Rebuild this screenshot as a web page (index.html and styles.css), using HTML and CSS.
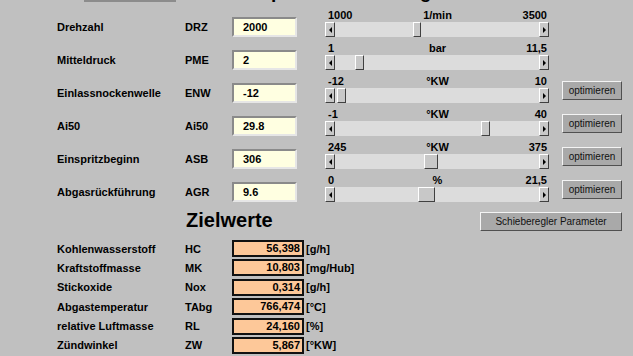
FILE: index.html
```html
<!DOCTYPE html>
<html>
<head>
  <title>Betriebspunkt-Einstellung</title>
  <link rel="stylesheet" href="styles.css">
</head>
<body>
  <div class="top">
    <div class="tab"></div>
    <div class="title">Betriebspunkt-Einstellung</div>
  </div>

  <div class="params">
    <div class="row">
      <div class="name">Drehzahl</div>
      <div class="abbr">DRZ</div>
      <div class="input">2000</div>
      <div class="slider">
        <div class="scale"><span>1000</span><span>1/min</span><span class="max">3500</span></div>
        <div class="bar">
          <div class="arrow left"></div>
          <div class="track"><div class="thumb" style="--pos:0.4;--w:8px"></div></div>
          <div class="arrow right"></div>
        </div>
      </div>
    </div>

    <div class="row">
      <div class="name">Mitteldruck</div>
      <div class="abbr">PME</div>
      <div class="input">2</div>
      <div class="slider">
        <div class="scale"><span>1</span><span>bar</span><span class="max">11,5</span></div>
        <div class="bar">
          <div class="arrow left"></div>
          <div class="track"><div class="thumb" style="--pos:0.1;--w:9px"></div></div>
          <div class="arrow right"></div>
        </div>
      </div>
    </div>

    <div class="row">
      <div class="name">Einlassnockenwelle</div>
      <div class="abbr">ENW</div>
      <div class="input">-12</div>
      <div class="slider">
        <div class="scale"><span>-12</span><span>°KW</span><span class="max">10</span></div>
        <div class="bar">
          <div class="arrow left"></div>
          <div class="track"><div class="thumb" style="--pos:0.01;--w:9px"></div></div>
          <div class="arrow right"></div>
        </div>
      </div>
      <div class="btn">optimieren</div>
    </div>

    <div class="row">
      <div class="name">Ai50</div>
      <div class="abbr">Ai50</div>
      <div class="input">29.8</div>
      <div class="slider">
        <div class="scale"><span>-1</span><span>°KW</span><span class="max">40</span></div>
        <div class="bar">
          <div class="arrow left"></div>
          <div class="track"><div class="thumb" style="--pos:0.751;--w:9px"></div></div>
          <div class="arrow right"></div>
        </div>
      </div>
      <div class="btn">optimieren</div>
    </div>

    <div class="row">
      <div class="name">Einspritzbeginn</div>
      <div class="abbr">ASB</div>
      <div class="input">306</div>
      <div class="slider">
        <div class="scale"><span>245</span><span>°KW</span><span class="max">375</span></div>
        <div class="bar">
          <div class="arrow left"></div>
          <div class="track"><div class="thumb" style="--pos:0.469;--w:14px"></div></div>
          <div class="arrow right"></div>
        </div>
      </div>
      <div class="btn">optimieren</div>
    </div>

    <div class="row">
      <div class="name">Abgasrückführung</div>
      <div class="abbr">AGR</div>
      <div class="input">9.6</div>
      <div class="slider">
        <div class="scale"><span>0</span><span>%</span><span class="max">21,5</span></div>
        <div class="bar">
          <div class="arrow left"></div>
          <div class="track"><div class="thumb" style="--pos:0.4465;--w:17px"></div></div>
          <div class="arrow right"></div>
        </div>
      </div>
      <div class="btn">optimieren</div>
    </div>
  </div>

  <div class="goals-head">
    <div class="heading">Zielwerte</div>
    <div class="btn wide">Schieberegler Parameter</div>
  </div>

  <div class="goals">
    <div class="out-row">
      <div class="name">Kohlenwasserstoff</div>
      <div class="abbr">HC</div>
      <div class="value">56,398</div>
      <div class="unit">[g/h]</div>
    </div>
    <div class="out-row">
      <div class="name">Kraftstoffmasse</div>
      <div class="abbr">MK</div>
      <div class="value">10,803</div>
      <div class="unit">[mg/Hub]</div>
    </div>
    <div class="out-row">
      <div class="name">Stickoxide</div>
      <div class="abbr">Nox</div>
      <div class="value">0,314</div>
      <div class="unit">[g/h]</div>
    </div>
    <div class="out-row">
      <div class="name">Abgastemperatur</div>
      <div class="abbr">TAbg</div>
      <div class="value">766,474</div>
      <div class="unit">[°C]</div>
    </div>
    <div class="out-row">
      <div class="name">relative Luftmasse</div>
      <div class="abbr">RL</div>
      <div class="value">24,160</div>
      <div class="unit">[%]</div>
    </div>
    <div class="out-row">
      <div class="name">Zündwinkel</div>
      <div class="abbr">ZW</div>
      <div class="value">5,867</div>
      <div class="unit">[°KW]</div>
    </div>
  </div>
</body>
</html>
```

FILE: styles.css
```css
body { margin: 0; width: 633px; height: 356px; overflow: hidden; background: #c0c0c0; color: #000; font-family: "Liberation Sans", Arial, sans-serif; font-size: 11px; font-weight: bold; }

.top { display: flex; height: 4px; overflow: hidden; }
.tab { width: 92px; height: 2px; margin-left: 84px; background: #8c8c8c; }
.title { margin: -20px 0 0 19px; font-size: 19px; line-height: 24px; white-space: nowrap; }

.params, .goals { padding-left: 57px; }
.row { display: flex; align-items: flex-end; height: 33px; }
.name { width: 128px; line-height: 20px; white-space: nowrap; }
.abbr { width: 47px; line-height: 20px; }

.input { width: 65px; height: 20px; box-sizing: border-box; padding-left: 9px; line-height: 16px; background: #ffffe1; border: 2px solid; border-color: #8a8a8a #e6e6e6 #e6e6e6 #8a8a8a; }

.slider { width: 224px; margin-left: 28px; }
.scale { display: grid; grid-template-columns: 1fr auto 1fr; line-height: 14px; padding: 0 2px 0 3px; }
.scale .max { text-align: right; }
.bar { display: flex; height: 15px; }
.arrow { width: 10px; box-sizing: border-box; background: #c8c8c8; border: 1px solid; border-color: #fff #404040 #404040 #fff; display: flex; align-items: center; justify-content: center; }
.arrow::before { content: ""; border-top: 3px solid transparent; border-bottom: 3px solid transparent; }
.arrow.left::before { border-right: 3px solid #000; }
.arrow.right::before { border-left: 3px solid #000; }
.track { flex: 1; display: flex; background: #dcdcdc; }
.thumb { width: var(--w); margin-left: calc((100% - var(--w)) * var(--pos)); box-sizing: border-box; background: #c8c8c8; border: 1px solid; border-color: #fff #404040 #404040 #fff; }

.btn { width: 60px; height: 19px; margin: 0 0 3px 13px; box-sizing: border-box; background: #a9a9a9; border: 1px solid; border-color: #f4f4f4 #505050 #505050 #f4f4f4; font-size: 10px; font-weight: normal; line-height: 17px; text-align: center; color: #111; white-space: nowrap; }

.goals-head { display: flex; align-items: flex-end; height: 29px; }
.heading { margin-left: 186px; font-size: 20px; line-height: 22px; }
.btn.wide { width: 142px; margin: 0 11px 0 auto; }

.goals { margin-top: 9px; display: flex; flex-direction: column; gap: 2.4px; }
.out-row { display: flex; align-items: center; height: 17px; }
.value { width: 72px; height: 17px; box-sizing: border-box; padding-right: 2px; line-height: 13px; text-align: right; background: #fdc899; border: 2px solid #111; }
.unit { margin-left: 2px; }
```
